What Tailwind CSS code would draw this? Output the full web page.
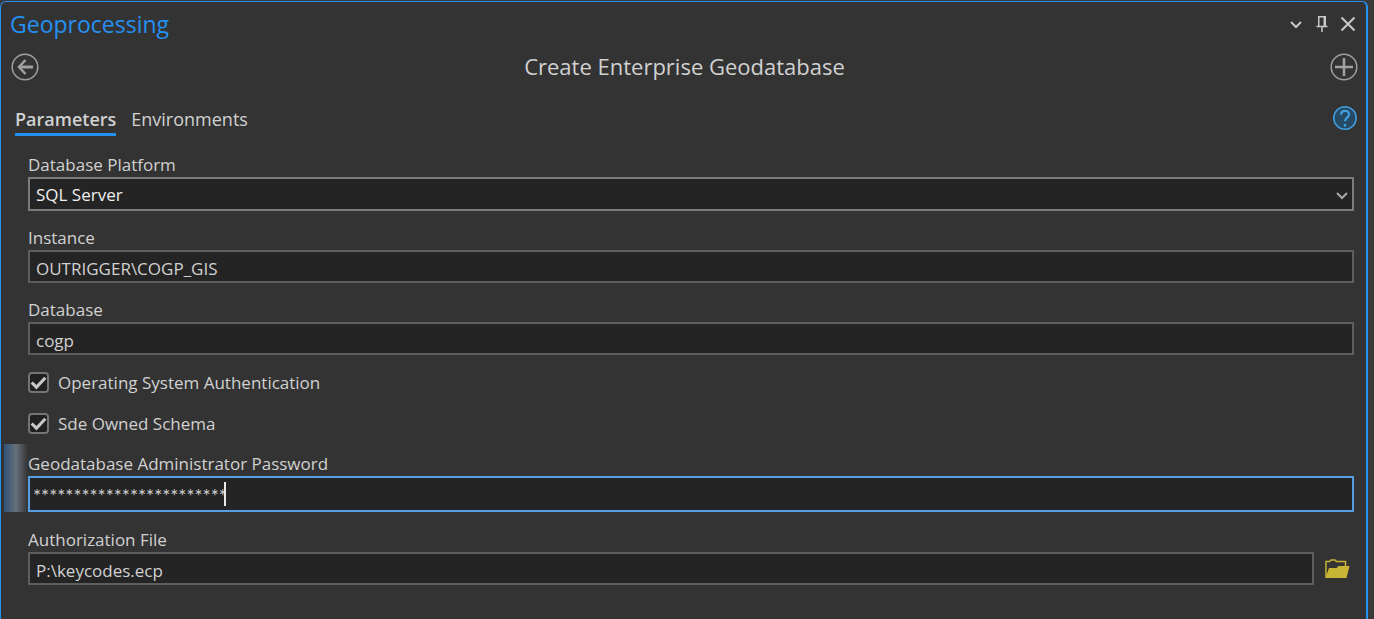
<!DOCTYPE html>
<html lang="en">
<head>
<meta charset="utf-8">
<title>Geoprocessing</title>
<script src="https://cdn.jsdelivr.net/npm/@tailwindcss/browser@4"></script>
</head>
<body class="min-h-screen bg-[#3a3a3a] pt-px pr-1.5 flex font-['Open_Sans','Noto_Sans',sans-serif] text-[#d1d1d1]">
<main class="flex-1 rounded-t-md border border-r-2 border-b-0 border-[#2490f2] bg-[#333333]">
  <header class="flex h-[43px] items-center justify-between pl-[9px] pr-2.5">
    <h1 class="text-[23px] leading-8 text-[#2490f2]">Geoprocessing</h1>
    <div class="flex items-center gap-3 text-[#c8c8c8]">
      <button type="button" aria-label="Window options"><svg class="block size-4" viewBox="0 0 16 16" fill="none" stroke="currentColor" stroke-width="2"><path d="M3 6l5 5 5-5"/></svg></button>
      <button type="button" aria-label="Auto hide"><svg class="block h-4 w-3" viewBox="0 0 12 16" fill="none" stroke="currentColor"><path stroke-width="1.500" d="M2.750 10V.75h6.500V10M0.500 10.500h11M6 11v5"/><path stroke-width="2" d="M8.500 1v9"/></svg></button>
      <button type="button" aria-label="Close"><svg class="block size-4" viewBox="0 0 16 16" fill="none" stroke="currentColor" stroke-width="2"><path d="M1.500 1.500l13 13M14.500 1.500l-13 13"/></svg></button>
    </div>
  </header>
  <div class="flex h-11 items-center justify-between pl-2.5 pr-2">
    <button type="button" aria-label="Back" class="text-[#a0a0a0]"><svg class="block size-7" viewBox="0 0 28 28" fill="none" stroke="currentColor"><circle cx="14" cy="14" r="12.8" stroke-width="1.500"/><path stroke-width="3" d="M8.500 14H22"/><path stroke-width="2.500" d="M14.500 7L8 14l6.500 7"/></svg></button>
    <h2 class="pb-0.5 text-[22px] leading-8">Create Enterprise Geodatabase</h2>
    <button type="button" aria-label="Add" class="text-[#a0a0a0]"><svg class="block size-7" viewBox="0 0 28 28" fill="none" stroke="currentColor"><circle cx="14" cy="14" r="12.8" stroke-width="1.500"/><path stroke-width="2.500" d="M5 14h18M14 5v18"/></svg></button>
  </div>
  <div class="flex h-[55px] items-end justify-between pl-3.5 pr-[9px] pb-2">
    <nav class="flex gap-[15px] text-[18px]">
      <a href="#parameters" class="border-b-3 border-[#2490f2] leading-7 font-semibold">Parameters</a>
      <a href="#environments" class="leading-7">Environments</a>
    </nav>
    <button type="button" aria-label="Help" class="mb-1.5 text-[#419fdf]"><svg class="block size-6" viewBox="0 0 24 24" fill="none" stroke="currentColor"><circle cx="12" cy="12" r="11.2" fill="#264a66" stroke-width="1.500"/><path stroke-width="2.200" d="M8 8.800C8 3.500 16 3.500 16 8.500c0 3-4 3.200-4 6.800"/><path stroke-width="2.400" d="M12 18v2.500"/></svg></button>
  </div>
  <form class="pr-3 pl-[27px] pt-[9px] text-[17px] leading-6">
    <label for="platform" class="block">Database Platform</label>
    <div class="relative mb-[15px]">
      <select id="platform" class="block h-[34px] w-full appearance-none border-2 border-[#7b7b7b] bg-[#242424] px-1.5 pt-0.5 text-[#f0f0f0]"><option>SQL Server</option></select>
      <svg class="pointer-events-none absolute top-2.5 right-1 size-4 text-[#a8a8a8]" viewBox="0 0 16 16" fill="none" stroke="currentColor" stroke-width="2"><path d="M3 6l5 5 5-5"/></svg>
    </div>
    <label for="instance" class="block">Instance</label>
    <input id="instance" type="text" value="OUTRIGGER\COGP_GIS" class="mb-[15px] block h-[33px] w-full border-2 border-[#5e5e5e] bg-[#242424] px-1.5 pt-1">
    <label for="database" class="block">Database</label>
    <input id="database" type="text" value="cogp" class="mb-[15px] block h-[33px] w-full border-2 border-[#5e5e5e] bg-[#242424] px-1.5 pt-1">
    <div class="flex flex-col gap-[17px]">
      <label class="flex items-center gap-[9px]"><span class="relative block size-[21px]"><input type="checkbox" checked class="block size-[21px] appearance-none rounded-sm border-2 border-[#747474] bg-[#202020]"><svg class="pointer-events-none absolute inset-0 size-[21px]" viewBox="0 0 20 20" fill="none" stroke="#c8c8c8" stroke-width="3"><path d="M3.500 10l4.500 4.500 8.500-9"/></svg></span><span class="pt-0.5 leading-[22px]">Operating System Authentication</span></label>
      <label class="flex items-center gap-[9px]"><span class="relative block size-[21px]"><input type="checkbox" checked class="block size-[21px] appearance-none rounded-sm border-2 border-[#747474] bg-[#202020]"><svg class="pointer-events-none absolute inset-0 size-[21px]" viewBox="0 0 20 20" fill="none" stroke="#c8c8c8" stroke-width="3"><path d="M3.500 10l4.500 4.500 8.500-9"/></svg></span><span class="pt-0.5 leading-[22px]">Sde Owned Schema</span></label>
    </div>
    <div class="relative mt-[9px] mb-4 pt-2">
      <span class="absolute inset-y-0 -left-6 w-6 bg-linear-to-r from-[#2f5275] via-[#66717b] to-[#333333]"></span>
      <label for="password" class="relative block">Geodatabase Administrator Password</label>
      <div class="relative">
        <input id="password" type="text" autocomplete="off" value="************************" class="block h-9 w-full border-2 border-[#569de5] bg-[#242424] px-[3px] pt-0.5 font-[Lato,sans-serif] text-[19px]">
        <span class="absolute top-1.5 left-[196px] h-6 w-0.5 bg-[#e8e8e8]"></span>
      </div>
    </div>
    <label for="authfile" class="block">Authorization File</label>
    <div class="flex items-center gap-2.5">
      <input id="authfile" type="text" value="P:\keycodes.ecp" class="block h-[33px] min-w-0 flex-1 border-2 border-[#5e5e5e] bg-[#242424] px-1.5 pt-1">
      <button type="button" aria-label="Browse" class="mr-1"><svg class="block h-5 w-[26px]" viewBox="0 0 26 20"><path d="M2 19V2.500h3.500L7 1h4l1.500 1.500h9V8" fill="none" stroke="#c9b535" stroke-width="1.500"/><path d="M1.500 19L5 9h7.500l2-2H25.500l-3 12z" fill="#c9b535"/></svg></button>
    </div>
  </form>
</main>
</body>
</html>
